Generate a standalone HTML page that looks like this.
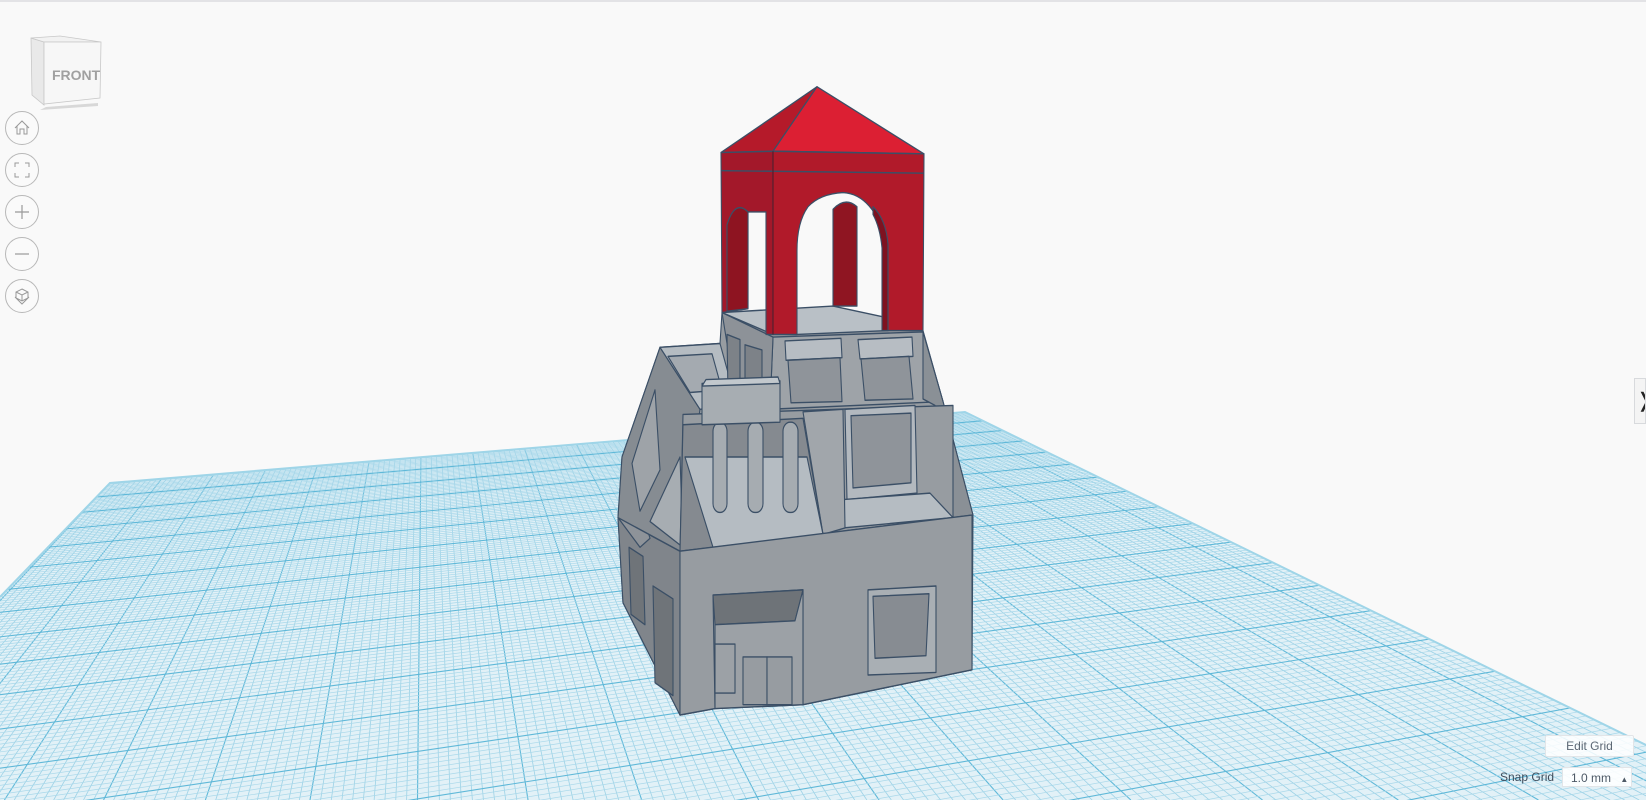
<!DOCTYPE html>
<html><head><meta charset="utf-8">
<style>
html,body{margin:0;padding:0;background:#f9f9f9;width:1646px;height:800px;overflow:hidden;font-family:"Liberation Sans",sans-serif}
#stage{position:absolute;left:0;top:0;overflow:hidden}
.btn{position:absolute;left:5px;width:32px;height:32px;border:1px solid #b8b8b8;border-radius:50%;background:#fafafa}
.topline{position:absolute;left:0;top:0;width:1646px;height:2px;background:#e3e3e6}
.eg{position:absolute;left:1545px;top:735px;width:87px;height:20px;border:1px solid #e2e5e8;background:rgba(255,255,255,.85);color:#5b6774;font-size:12px;text-align:center;line-height:20px;border-radius:2px}
.sg{position:absolute;left:1500px;top:770px;color:#3f4d5c;font-size:12px;line-height:14px}
.sb{position:absolute;left:1562px;top:767px;width:70px;height:20px;border:1px solid #e2e5e8;background:rgba(255,255,255,.9);color:#4d5966;font-size:12px;line-height:20px;padding-left:8px;box-sizing:border-box}
.tab{position:absolute;left:1634px;top:378px;width:12px;height:46px;border:1px solid #d8dadd;background:#f4f4f4;color:#222;font-size:20px;line-height:44px;padding-left:1px;overflow:hidden;box-sizing:border-box}
</style></head><body>
<div class="topline"></div>
<svg id="stage" width="1646" height="800" viewBox="0 0 1646 800">
<defs>
<clipPath id="pl"><polygon points="110,483 965,412 1646,745 1646,800 0,800 0,597"/></clipPath>
</defs>
<polygon points="110,483 965,412 1646,745 1646,800 0,800 0,597" fill="#e2f1f7"/>
<g id="grid" clip-path="url(#pl)"></g>
<polyline points="0,597 110,483 965,412 1646,745" fill="none" stroke="#9fd5e8" stroke-width="2"/>

<g transform="matrix(1,0,0,1.29,0,-20.3)">
<g stroke="#3b4f66" stroke-width="1.1" stroke-linejoin="round" vector-effect="non-scaling-stroke">
<polygon points="622,370 660,285 720,282 722,258 923,272 943,327 973,415 972,535 803,562 715,565 680,570 623,483 618,417" fill="#979ca1"/>
<polygon points="618,417 680,443 680,570 623,483" fill="#80858b"/>
<polygon points="629,440 643,447 645,500 631,492" fill="#6f7479"/>
<polygon points="653,470 673,480 673,555 655,545" fill="#6f7479"/>
<polygon points="618,417 636,398 650,433 640,440" fill="#8e9399"/>
<polygon points="622,370 660,285 700,333 680,443 618,417" fill="#868c92"/>
<polygon points="632,375 655,318 660,380 640,412" fill="#9ea3a8"/>
<polygon points="650,420 680,370 683,440" fill="#a7adb2"/>
<polygon points="660,285 720,282 737,330 700,333" fill="#b5bcc2"/>
<polygon points="668,292 712,290 722,318 690,320" fill="#a4aab0"/>
<polygon points="773,277 923,273 943,327 770,333" fill="#9ea3a8"/>
<polygon points="722,258 773,277 770,333 737,330" fill="#8d9298"/>
<polygon points="727,275 740,279 740,325 728,322" fill="#7d8288"/>
<polygon points="745,283 762,287 762,328 745,326" fill="#7d8288"/>
<polygon points="722,258 833,253 887,262 888,272 797,275 773,275" fill="#b9c0c6"/>
<polygon points="785,280 841,278 842,293 786,295" fill="#b7bdc3"/>
<polygon points="788,295 840,293 842,327 791,328" fill="#8f949a"/>
<polygon points="858,279 912,277 913,292 860,294" fill="#b7bdc3"/>
<polygon points="861,294 909,292 913,325 865,326" fill="#8f949a"/>
<polygon points="923,273 943,327 973,415 953,417 935,330 923,325" fill="#8a9096"/>
<polygon points="683,337 953,330 953,417 680,443" fill="#979ca1"/>
<polygon points="845,333 915,330 917,398 847,403" fill="#b3b9bf"/>
<polygon points="851,338 911,336 911,390 853,394" fill="#8f949a"/>
<polygon points="843,403 930,398 953,417 843,425" fill="#b5bcc2"/>
<polygon points="803,335 843,333 845,425 823,430" fill="#a1a6ab"/>
<polygon points="683,345 803,340 823,430 713,440 680,443" fill="#858a90"/>
<polygon points="685,370 807,370 823,430 713,440" fill="#b5bcc2"/>
<rect x="713" y="343" width="14" height="70" rx="7" fill="#a6acb1"/>
<rect x="748" y="343" width="15" height="70" rx="7" fill="#a6acb1"/>
<rect x="783" y="343" width="15" height="70" rx="7" fill="#a6acb1"/>
<polygon points="702,313 780,311 780,343 702,345" fill="#a7adb2"/>
<polygon points="706,310 778,308 780,313 702,315" fill="#c2c8cd"/>
<polygon points="680,443 972,415 972,535 803,562 803,473 713,477 715,565 680,570" fill="#979ca1"/>
<polygon points="713,477 803,473 795,497 715,500" fill="#6e7378"/>
<polygon points="715,500 795,497 803,473 803,562 715,565" fill="#9ca1a6"/>
<rect x="715" y="515" width="20" height="38" fill="#9ca1a6"/>
<rect x="743" y="525" width="24" height="37" fill="#979ca1"/>
<rect x="767" y="525" width="25" height="37" fill="#979ca1"/>
<polygon points="868,473 936,470 936,537 868,539" fill="#a9afb4"/>
<polygon points="873,478 929,476 926,524 875,526" fill="#878c92"/>
<polygon points="817,83 721,134 773,133" fill="#b51a2a"/>
<polygon points="817,83 773,133 924,135" fill="#dc1f33"/>
<polygon points="721,134 773,133 773,275 766,275 766,180 748,180 748,255 722,258" fill="#a3182a"/>
<path d="M773,133 L924,135 L923,272 L888,272 L888,205 Q873,166 843,165 Q820,166 808,176 Q797,188 797,210 L797,275 L773,275 Z" fill="#b11a2a"/>
<path d="M833,178 Q845,168 857,176 L857,253 L833,253 Z" fill="#8f1522"/>
<path d="M873,176 Q886,186 888,205 L888,272 L882,272 L882,208 Q880,192 873,182 Z" fill="#7e1220"/>
<path d="M727,190 Q735,170 748,180 L748,255 L727,257 Z" fill="#8e1421"/>
<line x1="721" y1="148" x2="924" y2="150"/>
<line x1="773" y1="133" x2="773" y2="275" stroke="#5a1a28"/>
</g>
</g>
<g>
<polygon points="40,110 98,106 98,103 46,107" fill="#d8d8d8"/>
<polygon points="31,38 44,42 44,105 32,95" fill="#e9e9e9" stroke="#c8c8c8" stroke-width=".8"/>
<polygon points="31,38 60,36 101,42 44,42" fill="#f2f2f2" stroke="#c8c8c8" stroke-width=".8"/>
<polygon points="44,42 101,42 100,98 44,104" fill="#f7f7f7" stroke="#c8c8c8" stroke-width=".8"/>
<text x="52" y="80" font-family="Liberation Sans" font-weight="bold" font-size="14" fill="#a0a0a0">FRONT</text>
</g>
</svg>
<div class="btn" style="top:111px"><svg width="32" height="32"><path d="M9,16 L16,9 L23,16 M11,14 V22 H14 V17 H18 V22 H21 V14" fill="none" stroke="#999" stroke-width="1"/></svg></div>
<div class="btn" style="top:153px"><svg width="32" height="32"><path d="M9,13 V9 H13 M19,9 H23 V13 M23,19 V23 H19 M13,23 H9 V19" fill="none" stroke="#999" stroke-width="1"/></svg></div>
<div class="btn" style="top:195px"><svg width="32" height="32"><path d="M16,9 V23 M9,16 H23" stroke="#999" stroke-width="1.2"/></svg></div>
<div class="btn" style="top:237px"><svg width="32" height="32"><path d="M9,16 H23" stroke="#999" stroke-width="1.2"/></svg></div>
<div class="btn" style="top:279px"><svg width="32" height="32"><path d="M16,9 L22,12 L22,18 L16,21 L10,18 L10,12 Z M10,12 L16,15 L22,12 M16,15 V21 M9,17 L16,24 L23,17" fill="none" stroke="#999" stroke-width="1"/></svg></div>
<div class="tab">&#x276D;</div>
<div class="eg">Edit Grid</div>
<div class="sg">Snap Grid</div>
<div class="sb">1.0 mm <span style="font-size:8px;margin-left:6px">&#9650;</span></div>
<script>
(function(){
var g=document.getElementById('grid'),NS='http://www.w3.org/2000/svg';
var V1=[424,147],V2=[5000,75],B0=[110,483],B1=[965,412];
function ln(x1,y1,x2,y2,c,w){var l=document.createElementNS(NS,'line');l.setAttribute('x1',x1);l.setAttribute('y1',y1);l.setAttribute('x2',x2);l.setAttribute('y2',y2);l.setAttribute('stroke',c);l.setAttribute('stroke-width',w);g.appendChild(l);}
var len=Math.hypot(B1[0]-B0[0],B1[1]-B0[1]);var n=Math.round(len/5.2);
for(var i=0;i<=n+200;i++){var u=i/n;var px=B0[0]+(B1[0]-B0[0])*u,py=B0[1]+(B1[1]-B0[1])*u;
var dx=px-V1[0],dy=py-V1[1];var t=(800-V1[1])/dy;var major=i%10==0;
ln(px,py,V1[0]+dx*t,800,major?'#5fb8d8':'#9dd2e6',major?1.1:0.8);}
for(var j=0;j<400;j++){var k=1/(1-j*0.004);if(k>6||k<0)break;
var px=V1[0]+(B0[0]-V1[0])*k,py=V1[1]+(B0[1]-V1[1])*k;var dx=px-V2[0],dy=py-V2[1];
var t=(-50-V2[0])/dx;var major=j%10==0;
ln(V2[0],V2[1],-50,V2[1]+dy*t,major?'#5fb8d8':'#a9d8ea',major?1.1:0.7);}
})();
</script>
</body></html>
